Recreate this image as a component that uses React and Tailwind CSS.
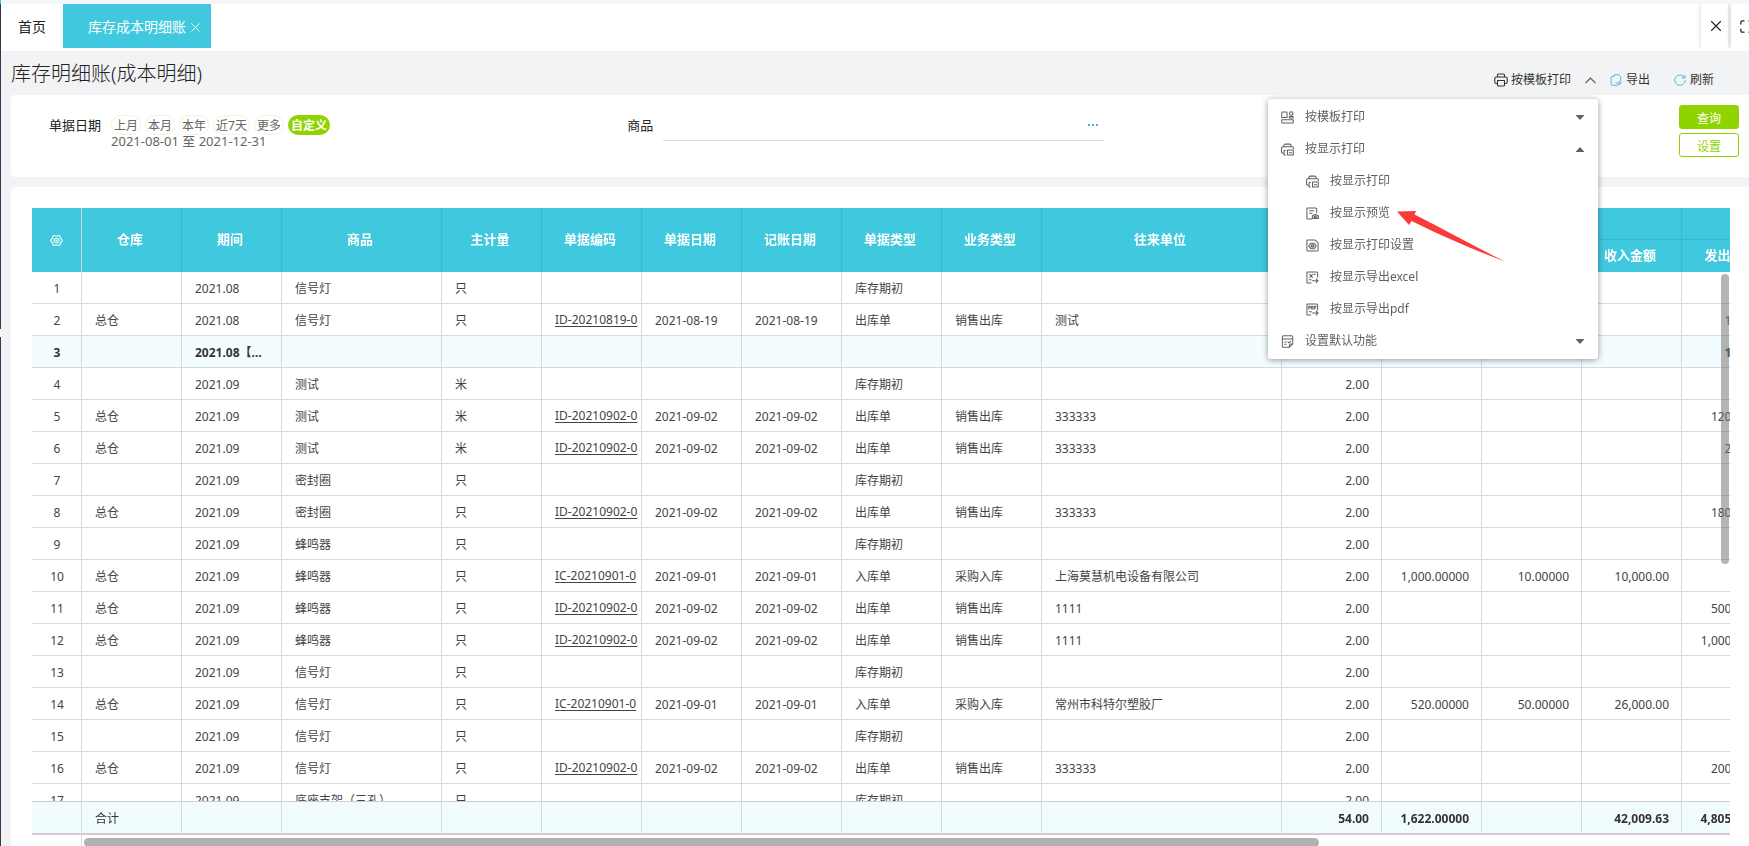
import { useState } from 'react';
import { X, Maximize } from 'lucide-react';

const FONT = "font-['Noto_Sans','Noto_Sans_CJK_SC',sans-serif]";

const open = (no, goods, unit) => ({ no, period: '2021.09', goods, unit, type: '库存期初', rate: '2.00' });
const out = (no, goods, unit, customer, qty) => ({
    no, store: '总仓', period: '2021.09', goods, unit, code: 'ID-20210902-0', date: '2021-09-02',
    type: '出库单', biz: '销售出库', customer, rate: '2.00', outQty: qty
});
const into = (no, goods, customer, inQty, price, amount) => ({
    no, store: '总仓', period: '2021.09', goods, unit: '只', code: 'IC-20210901-0', date: '2021-09-01',
    type: '入库单', biz: '采购入库', customer, rate: '2.00', inQty, price, amount
});

const rows = [
    { ...open(1, '信号灯', '只'), period: '2021.08', rate: '' },
    { ...out(2, '信号灯', '只', '测试', '1.00000'), period: '2021.08', code: 'ID-20210819-0', date: '2021-08-19', rate: '' },
    { no: 3, period: '2021.08【小计】', outQty: '1.00000', subtotal: true },
    open(4, '测试', '米'),
    out(5, '测试', '米', '333333', '120.00000'),
    out(6, '测试', '米', '333333', '2.00000'),
    open(7, '密封圈', '只'),
    out(8, '密封圈', '只', '333333', '180.00000'),
    open(9, '蜂鸣器', '只'),
    into(10, '蜂鸣器', '上海莫慧机电设备有限公司', '1,000.00000', '10.00000', '10,000.00'),
    out(11, '蜂鸣器', '只', '1111', '500.00000'),
    out(12, '蜂鸣器', '只', '1111', '1,000.00000'),
    open(13, '信号灯', '只'),
    into(14, '信号灯', '常州市科特尔塑胶厂', '520.00000', '50.00000', '26,000.00'),
    open(15, '信号灯', '只'),
    out(16, '信号灯', '只', '333333', '200.00000'),
    open(17, '底座支架（三孔）', '只'),
];

const columns = ['仓库', '期间', '商品', '主计量', '单据编码', '单据日期', '记账日期', '单据类型', '业务类型', '往来单位', ''];
const widths = [50, 100, 100, 160, 100, 100, 100, 100, 100, 100, 240, 100, 100, 100, 100, 100];
const ranges = ['上月', '本月', '本年', '近7天', '更多'];

const App = () => {
    const [menuOpen, setMenuOpen] = useState(true);
    const [range, setRange] = useState('自定义');
    const [goods, setGoods] = useState('');

    return (
        <div className={`flex h-screen overflow-hidden bg-[#f2f3f5] text-xs text-[#444] ${FONT}`}>

            {/* Edge of the collapsed side menu */}
            <div className="flex w-px shrink-0 flex-col">
                <div className="h-1 bg-[#40c8de]"></div>
                <div className="h-[325px] bg-[#3c3650]"></div>
                <div className="h-2 bg-white"></div>
                <div className="flex-1 bg-[#3c3650]"></div>
            </div>

            <div className="flex min-w-0 flex-1 flex-col">
                {/* Tab bar */}
                <div className="h-1 shrink-0 bg-[#f5f6fa]"></div>
                <nav className="flex h-[47px] shrink-0 items-start bg-white pb-[3px] text-sm">
                    <a href="#home" className="flex h-full w-[62px] items-center pl-[17px] pt-px text-[#222]">首页</a>
                    <div className="flex h-full w-[148px] items-center bg-[#40c8de] pl-[25px] pt-px text-white">
                        <a href="#ledger">库存成本明细账</a>
                        <button aria-label="关闭标签" className="ml-[2px] pt-px"><X size={15} strokeWidth={1.5} /></button>
                    </div>
                    <div className="ml-auto flex h-full gap-[3px] overflow-hidden pl-2 text-[#222]">
                        <button aria-label="关闭" className="flex w-[27px] items-center justify-center bg-white pl-[3px] shadow-[0_0_5px_rgba(0,0,0,0.18)]">
                            <X size={18} strokeWidth={1.5} />
                        </button>
                        <button aria-label="全屏" className="flex w-[18px] items-center overflow-hidden bg-white pl-2 shadow-[0_0_5px_rgba(0,0,0,0.18)]">
                            <Maximize size={15} strokeWidth={2} className="shrink-0" />
                        </button>
                    </div>
                </nav>

                {/* Title and tools */}
                <header className="flex h-11 shrink-0 items-center justify-between pl-[10px] pr-[35px]">
                    <h1 className="pt-[2px] text-xl font-light text-[#222]">库存明细账(成本明细)</h1>
                    <div className="flex items-center pt-[14px] text-[#333]">
                        <div className="relative mr-3 flex items-center pr-[2px]">
                            <button className="flex items-center gap-[3px]"><PrinterIcon size={14} /> 按模板打印</button>
                            <button aria-label="展开打印菜单" onClick={() => setMenuOpen(!menuOpen)} className="ml-[14px]">
                                <svg width="11" height="7" viewBox="0 0 11 7" fill="none" stroke="#555" strokeWidth="1.1">
                                    <path d="M0.500 6.200L5.500 1L10.500 6.200" />
                                </svg>
                            </button>
                            {menuOpen && <PrintMenu />}
                        </div>
                        <button className="mr-6 flex items-center gap-1"><ExportIcon /> 导出</button>
                        <button className="flex items-center gap-1"><RefreshIcon /> 刷新</button>
                    </div>
                </header>

                {/* Filters */}
                <section className="ml-[10px] flex h-[82px] shrink-0 rounded-l bg-white">
                    <div className="flex w-1/3 items-start gap-[10px] pl-[38px] pt-5">
                        <span className="text-[13px] leading-5 text-[#222]">单据日期</span>
                        <div className="text-[#666]">
                            <div className="flex gap-1">
                                {ranges.map((r) => (
                                    <button key={r} onClick={() => setRange(r)} className="h-5 rounded-full border border-[#eef6d8] px-[2px] leading-5">{r}</button>
                                ))}
                                <button onClick={() => setRange('自定义')} className="h-5 rounded-full bg-[#8fd400] px-[3px] pt-px font-bold leading-5 text-white" aria-pressed={range === '自定义'}>自定义</button>
                            </div>
                            <div className="text-[13px] leading-3">2021-08-01 至 2021-12-31</div>
                        </div>
                    </div>
                    <div className="flex w-1/3 items-start gap-[10px] pl-[37px] pr-[66px] pt-5">
                        <label htmlFor="goods" className="text-[13px] leading-5 text-[#222]">商品</label>
                        <div className="flex h-[26px] flex-1 items-start border-b border-[#dfdbe3]">
                            <input id="goods" value={goods} onChange={(e) => setGoods(e.target.value)} className="h-5 min-w-0 flex-1 outline-none" />
                            <button aria-label="选择商品" className="mr-[6px] flex h-5 items-center gap-[2px]">
                                <i className="size-[2px] bg-[#40b4d4]"></i>
                                <i className="size-[2px] bg-[#40b4d4]"></i>
                                <i className="size-[2px] bg-[#40b4d4]"></i>
                            </button>
                        </div>
                    </div>
                    <div className="ml-auto flex flex-col gap-1 pr-[10px] pt-[10px]">
                        <button className="h-6 w-[60px] rounded-[3px] border border-[#8fd400] bg-[#8fd400] pt-[3px] text-white">查询</button>
                        <button className="h-6 w-[60px] rounded-[3px] border border-[#8fd400] bg-white pt-[3px] text-[#8fd400]">设置</button>
                    </div>
                </section>

                {/* Ledger */}
                <section className="ml-[10px] mt-[10px] flex min-h-0 flex-1 flex-col rounded-tl bg-white pl-[21px] pr-[19px] pt-[21px]">
                    <div className="relative min-h-0 flex-1 overflow-hidden">
                        <div className="h-full overflow-hidden">
                            <LedgerTable />
                        </div>
                        <div className="absolute right-px top-[66px] z-20 h-[290px] w-2 rounded-full bg-[#777]/55"></div>
                    </div>
                    <div className="flex h-[11px] shrink-0">
                        <div className="w-[50px] border-r border-[#d5dadd]"></div>
                        <div className="flex-1 pl-[2px] pt-[3px]">
                            <div className="h-[9px] w-3/4 rounded-l-full rounded-r-full bg-[#b1b1b4]"></div>
                        </div>
                    </div>
                </section>
            </div>
        </div>
    );
};

const LedgerTable = () => (
    <table className="w-[1750px] table-fixed border-separate border-spacing-0">
        <colgroup>
            {widths.map((w, i) => <col key={i} style={{ width: w }} />)}
        </colgroup>
        <thead className="sticky top-0 z-10 bg-[#40c8de] text-[13px] text-white">
            <tr>
                <th rowSpan={2} className="border-r border-[#c9d9dd]">
                    <button aria-label="列设置" className="mx-auto block"><GearIcon /></button>
                </th>
                {columns.map((c) => (
                    <th key={c} rowSpan={2} className="h-8 border-r border-[#38b6cb] p-0 pr-[3px]">{c}</th>
                ))}
                <th colSpan={3} className="h-8 border-b border-r border-[#38b6cb] p-0">收入</th>
                <th className="h-8 border-b border-[#38b6cb] p-0"></th>
            </tr>
            <tr>
                <th className="h-8 border-r border-[#38b6cb] p-0 pr-[3px]">收入数量</th>
                <th className="h-8 border-r border-[#38b6cb] p-0 pr-[3px]">收入单价</th>
                <th className="h-8 border-r border-[#38b6cb] p-0 pr-[3px]">收入金额</th>
                <th className="h-8 p-0 pr-[3px]">发出数量</th>
            </tr>
        </thead>
        <tbody>
            {rows.map((r) => (
                <tr key={r.no} className={r.subtotal ? 'bg-[#f3fcff] font-bold text-[#333]' : 'bg-white'}>
                    <Cell center>{r.no}</Cell>
                    <Cell>{r.store}</Cell>
                    <Cell>{r.period}</Cell>
                    <Cell>{r.goods}</Cell>
                    <Cell>{r.unit}</Cell>
                    <td className="h-8 overflow-hidden whitespace-nowrap border-b border-r border-[#d5dadd] p-0 pl-[13px]">
                        {r.code && <a href={`#${r.code}`} className="underline underline-offset-2">{r.code}</a>}
                    </td>
                    <Cell>{r.date}</Cell>
                    <Cell>{r.date}</Cell>
                    <Cell>{r.type}</Cell>
                    <Cell>{r.biz}</Cell>
                    <Cell>{r.customer}</Cell>
                    <Cell right>{r.rate}</Cell>
                    <Cell right>{r.inQty}</Cell>
                    <Cell right>{r.price}</Cell>
                    <Cell right>{r.amount}</Cell>
                    <Cell right>{r.outQty}</Cell>
                </tr>
            ))}
        </tbody>
        <tfoot className="sticky bottom-0 z-10 bg-[#f1fcfc] text-[#333]">
            <tr>
                <TotalCell />
                <TotalCell><span className="font-normal">合计</span></TotalCell>
                {widths.slice(3, 12).map((w, i) => <TotalCell key={i} />)}
                <TotalCell>54.00</TotalCell>
                <TotalCell>1,622.00000</TotalCell>
                <TotalCell />
                <TotalCell>42,009.63</TotalCell>
                <TotalCell>4,805.00000</TotalCell>
            </tr>
        </tfoot>
    </table>
);

const Cell = ({ children, center = false, right = false }) => (
    <td className={`h-8 truncate border-b border-r border-[#d5dadd] py-0 pl-[13px] pr-3 pt-[3px] ${center ? 'text-center' : ''} ${right ? 'text-right' : ''}`}>
        {children}
    </td>
);

const TotalCell = ({ children }) => (
    <td className="h-[34px] border-b-2 border-r border-t border-[#cfcdd2] border-r-[#d5dadd] py-0 pl-[13px] pr-3 pt-[2px] text-right font-bold nth-2:text-left">
        {children}
    </td>
);

/* Print drop-down */
const PrintMenu = () => (
    <div className="absolute right-0 top-[27px] z-30 w-[330px] rounded-[3px] bg-white py-[2px] text-[#5f6064] shadow-[0_1px_6px_rgba(0,0,0,0.4)]">
        <MenuItem icon={<TemplateIcon />} label="按模板打印" caret="down" />
        <MenuItem icon={<ShowPrintIcon />} label="按显示打印" caret="up" />
        <MenuItem sub icon={<ShowPrintIcon />} label="按显示打印" />
        <MenuItem sub icon={<PreviewIcon />} label="按显示预览" />
        <MenuItem sub icon={<SetupIcon />} label="按显示打印设置" />
        <MenuItem sub icon={<ExcelIcon />} label="按显示导出excel" />
        <MenuItem sub icon={<PdfIcon />} label="按显示导出pdf" />
        <MenuItem icon={<DefaultIcon />} label="设置默认功能" caret="down" />
        <svg className="pointer-events-none absolute left-32 top-[110px]" width="112" height="56" viewBox="0 0 112 56" fill="#fb3b3a">
            <path d="M1 2.500L20 2L18.500 5.500C45 19 78 37 110 53C78 41 44 26 15.500 12L13 16Z" />
        </svg>
    </div>
);

const MenuItem = ({ icon, label, caret, sub = false }) => (
    <button className={`flex h-8 w-full items-center pr-[13px] ${sub ? 'pl-[38px]' : 'pl-[13px]'}`}>
        {icon}
        <span className="ml-[11px] flex-1 text-left">{label}</span>
        {caret && (
            <svg width="10" height="5" viewBox="0 0 10 5" fill="currentColor">
                <path d={caret === 'down' ? 'M0.500 0H9.500L5 5Z' : 'M0.500 5H9.500L5 0Z'} />
            </svg>
        )}
    </button>
);

/* Icons */
const Icon = ({ size = 13, className = '', children }) => (
    <svg width={size} height={size} viewBox="0 0 14 14" fill="none" stroke="currentColor" strokeWidth="1.1" strokeLinecap="round" strokeLinejoin="round" className={`shrink-0 ${className}`}>
        {children}
    </svg>
);

const PrinterIcon = ({ size }) => (
    <Icon size={size}>
        <path d="M3.500 4V2.200Q3.500 1 4.700 1H9.300Q10.500 1 10.500 2.200V4M3.500 10.500H2.200Q0.800 10.500 0.800 9V5.500Q0.800 4 2.200 4H11.800Q13.200 4 13.200 5.500V9Q13.200 10.500 11.800 10.500H10.500M3.500 7.500H10.500V12Q10.500 13 9.500 13H4.500Q3.500 13 3.500 12Z" />
    </Icon>
);

const ShowPrintIcon = () => (
    <Icon>
        <path d="M3 4V2.500L4.200 1.200H9.800L11 2.500V4M3 11H1.800Q0.600 11 0.600 9.800V5.500Q0.600 4 2 4H12Q13.400 4 13.400 5.500V6M4.800 8H3.300V12.800H4.800M7 7.500H13.200V12.800H7ZM9 10.500H11.500" />
    </Icon>
);

const TemplateIcon = () => (
    <Icon>
        <path d="M0.800 2Q0.800 1 1.800 1H5.500Q6.500 1 6.500 2V7H0.800ZM0.800 9.500H13.200V12.500Q13.200 13 12.500 13H1.500Q0.800 13 0.800 12.500ZM9 5.800H13V7.500H9Z" />
        <circle cx="11" cy="2.600" r="1.900" />
    </Icon>
);

const PreviewIcon = () => (
    <Icon>
        <path d="M6 13H2.200Q1 13 1 11.800V2.200Q1 1 2.200 1H10.300Q11.500 1 11.500 2.200V6M3.800 4H8.500M3.800 6.800H6.500" />
        <path d="M6.800 9.500Q10 6.500 13.300 9.500V12.500H6.800Z" fill="currentColor" fillOpacity="0.350" />
        <circle cx="10" cy="10.600" r="1" />
    </Icon>
);

const SetupIcon = () => (
    <Icon>
        <path d="M2 1H9.500L13 4V12Q13 13 12 13H2Q1 13 1 12V2Q1 1 2 1Z" />
        <path d="M5 4.500H9L11 7.500L9 10.500H5L3 7.500Z" fill="currentColor" fillOpacity="0.300" />
        <circle cx="7" cy="7.500" r="1.200" />
    </Icon>
);

const ExcelIcon = () => (
    <Icon>
        <path d="M5.500 13H2.200Q1 13 1 11.800V2.200Q1 1 2.200 1H11.300Q12.500 1 12.500 2.200V6.500M4 3.500L7 7M7 3.500L4 7M8.500 3.500H10M3.500 9.500H5.500M7 10.500H13M11 8.500L13 10.500L11 12.500" />
    </Icon>
);

const PdfIcon = () => (
    <Icon>
        <path d="M5 13H2.200Q1 13 1 11.800V2.200Q1 1 2.200 1H11.300Q12.500 1 12.500 2.200V7.500M3 6.500V3.500H4.500V5H3M6 3.500V6.500H7.500V3.500ZM9.200 6.500V3.500H11M9.200 5H10.500M3.500 9.500H6M7 10.800H13M11 8.800L13 10.800L11 12.800" />
    </Icon>
);

const DefaultIcon = () => (
    <Icon>
        <path d="M9 13.200H2.800Q1.500 13.200 1.500 12V2Q1.500 0.800 2.800 0.800H11.300Q12.600 0.800 12.600 2V9.500L9 13.200V11Q9 9.700 10.300 9.700H12.500M1.500 4.200H12.500M4 7.500H5.500M4 10H5.500M7.500 7.500L8.500 8.500L10.300 6.800" />
    </Icon>
);

const ExportIcon = () => (
    <Icon size={12} className="text-[#4ab7d8]">
        <path d="M4.500 3V2Q4.500 0.800 5.700 0.800H10L12.500 3.300V8M4.500 2.800H2.500Q1.300 2.800 1.300 4V12Q1.300 13.200 2.500 13.200H8.500Q9.700 13.200 9.700 12.300M7 10.500H12.800M10.800 8.500L12.800 10.500L10.800 12.500" />
    </Icon>
);

const RefreshIcon = () => (
    <Icon size={12} className="text-[#4ab7d8]">
        <path d="M12.500 4.500A6.100 6.100 0 1 0 13.100 7.500M12.800 1.500V4.600H9.700" />
    </Icon>
);

const GearIcon = () => (
    <Icon>
        <path d="M4.500 1.500L6 2.200H8L9.500 1.500L11 2.500L11.200 4.200L12.300 5.500L13.300 7L12.300 8.500L11.200 9.800L11 11.500L9.500 12.500L8 11.800H6L4.500 12.500L3 11.500L2.800 9.800L1.700 8.500L0.700 7L1.700 5.500L2.800 4.200L3 2.500Z" />
        <path d="M7 4.200L9.500 5.600V8.400L7 9.800L4.500 8.400V5.600Z" />
        <circle cx="7" cy="7" r="0.600" />
    </Icon>
);

export default App;
